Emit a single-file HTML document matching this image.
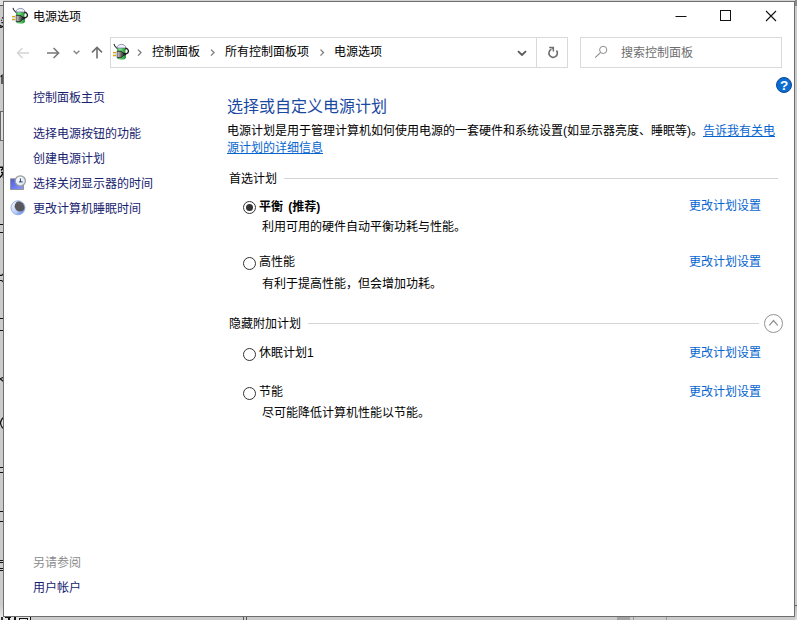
<!DOCTYPE html>
<html lang="zh-CN">
<head>
<meta charset="utf-8">
<title>电源选项</title>
<style>
*{box-sizing:border-box;margin:0;padding:0}
html,body{width:797px;height:620px;overflow:hidden;background:#cbcbcb}
body{position:relative;font-family:"Liberation Sans","Noto Sans CJK SC",sans-serif;font-size:12px;color:#000;line-height:17px}
#win{position:absolute;left:3px;top:1px;width:792px;height:616px;background:#fff;border:1px solid #6e6e6e}
.t{position:absolute;white-space:nowrap;line-height:17px;height:17px}
.nav{color:#17226f}
.lnk{color:#0565d0}
.u{text-decoration:underline}
.box{position:absolute;border:1px solid #d9d9d9;background:#fff}
.hr{position:absolute;height:1px;background:#d4d4d4}
.radio{position:absolute;width:13px;height:13px;border:1px solid #333;border-radius:50%;background:#fff}
.radio.on::after{content:"";position:absolute;left:2px;top:2px;width:7px;height:7px;border-radius:50%;background:#333}
svg{position:absolute;overflow:visible}
.d{position:absolute;background:#111}
</style>
</head>
<body>
<!-- desktop remnants behind the window -->
<div id="bg">
<div style="position:absolute;left:0;top:0;width:797px;height:1px;background:#d4d4d4"></div>
<div style="position:absolute;left:795px;top:0;width:2px;height:6px;background:#8a8a8a"></div>
<div style="position:absolute;left:0;top:0;width:3px;height:5px;background:#e0e0e0"></div>
<div class="d" style="left:0;top:5px;width:3px;height:1px;background:#5c5c5c"></div>
<svg style="left:0;top:16px" width="3" height="13" viewBox="0 0 3 13"><path d="M3 1.4 L2.2 2.4 M1.8 4 L1.2 4.6 M1.4 6.6 H3 M0 9.4 L1.6 10.2 M3 10 L1.8 11.2 L0 11.4" stroke="#111" stroke-width="1.3" fill="none"/></svg>
<svg style="left:0;top:74px" width="3" height="11" viewBox="0 0 3 11"><path d="M0.6 2.6 L2 1.4 V10" stroke="#111" stroke-width="1.2" fill="none"/></svg>
<div style="position:absolute;left:0;top:111px;width:3px;height:30px;border:1px solid #666;border-right:0;background:#dedede"></div>
<svg style="left:0;top:166px" width="4" height="13" viewBox="0 0 4 13"><rect x="0" y="0.6" width="3" height="11.6" fill="#dcdcdc"/><path d="M0 1.3 H3.6 M3.4 2 L1 4.6 M1 6.4 H3.6 M3.2 7.6 L0 11.4 M3.2 10.6 V11.6" stroke="#0a0a0a" stroke-width="1.5" fill="none"/></svg>
<div class="d" style="left:0;top:224px;width:3px;height:1px"></div>
<div class="d" style="left:0;top:232px;width:3px;height:1px"></div>
<svg style="left:0;top:272px" width="4" height="12" viewBox="0 0 4 12"><path d="M0 3.4 H1.6 Q2.6 3.2 3.6 1.2 M0 8.5 H1.6 Q2.6 8.8 3.6 10.6" stroke="#111" stroke-width="1.1" fill="none"/></svg>
<div class="d" style="left:0;top:318px;width:3px;height:1px"></div>
<div class="d" style="left:0;top:330px;width:3px;height:1px"></div>
<svg style="left:0;top:376px" width="4" height="7" viewBox="0 0 4 7"><path d="M3.6 1.2 L0 2.8 L3.6 5.4" stroke="#111" stroke-width="1.2" fill="none"/></svg>
<svg style="left:0;top:417px" width="4" height="12" viewBox="0 0 4 12"><path d="M3.6 0.2 Q-2.6 5.8 3.6 11.7 Z" fill="#dadada"/><path d="M3.6 0.2 Q-2.6 5.8 3.6 11.7" stroke="#111" stroke-width="1.2" fill="none"/></svg>
<div class="d" style="left:0;top:467px;width:3px;height:1px"></div>
<div class="d" style="left:0;top:472px;width:3px;height:1px"></div>
<div class="d" style="left:0;top:511px;width:3px;height:1px"></div>
<div class="d" style="left:0;top:521px;width:3px;height:1px"></div>
<div class="d" style="left:0;top:560px;width:3px;height:1px"></div>
<div class="d" style="left:0;top:562px;width:3px;height:1px"></div>
<div class="d" style="left:0;top:568px;width:3px;height:1px"></div>
<div class="d" style="left:0;top:570px;width:3px;height:1px"></div>
<div style="position:absolute;left:0;top:605px;width:3px;height:12px;background:linear-gradient(#cbcbcb,#e6e6e6)"></div>
<div class="d" style="left:795px;top:605px;width:2px;height:1px;background:#666"></div>
<div style="position:absolute;left:795px;top:606px;width:2px;height:14px;background:linear-gradient(#bdbdbd,#dcdcdc)"></div>
<!-- bottom strip -->
<div style="position:absolute;left:0;top:617px;width:31px;height:3px;background:#e4e4e4"></div>
<div class="d" style="left:1px;top:617px;width:2px;height:4px;background:#333"></div>
<div class="d" style="left:5px;top:617px;width:6px;height:1px"></div>
<div class="d" style="left:8px;top:617px;width:2px;height:4px"></div>
<div class="d" style="left:14px;top:617px;width:2px;height:4px"></div>
<div style="position:absolute;left:19px;top:618px;width:9px;height:4px;border:1px solid #111;background:#eee"></div>
<div class="d" style="left:30px;top:617px;width:1px;height:4px"></div>
<div class="d" style="left:243px;top:617px;width:1px;height:4px;background:#555"></div>
<div class="d" style="left:246px;top:617px;width:1px;height:4px;background:#555"></div>
<div style="position:absolute;left:617px;top:617px;width:13px;height:4px;background:#a2a2a2"></div>
<div class="d" style="left:633px;top:617px;width:1px;height:4px;background:#999"></div>
<div class="d" style="left:666px;top:617px;width:1px;height:4px;background:#999"></div>
</div>

<div id="win"></div>

<!-- title bar -->
<svg id="ico1" style="left:10px;top:6px" width="20" height="20" viewBox="0 0 20 20">
  <defs>
    <linearGradient id="gb" x1="0" y1="0" x2="1" y2="0"><stop offset="0" stop-color="#3aa845"/><stop offset=".3" stop-color="#7be486"/><stop offset="1" stop-color="#1c8a2a"/></linearGradient>
    <linearGradient id="gp" x1="0" y1="0" x2="1" y2="0"><stop offset="0" stop-color="#d8d8d8"/><stop offset=".4" stop-color="#777"/><stop offset=".8" stop-color="#2a2a2a"/><stop offset="1" stop-color="#1c1c1c"/></linearGradient>
  </defs>
  <path d="M3.1 2.2 C3.3 4.4 4.8 5 6.6 6.8" fill="none" stroke="#222" stroke-width="1.1" stroke-linecap="round"/>
  <path d="M6.1 6 C6.1 1.2 14.9 1.2 14.9 6 V15.4 C14.9 18.4 6.1 18.4 6.1 15.4 Z" fill="url(#gb)"/>
  <path d="M6.1 6 C6.1 1.2 14.9 1.2 14.9 6 Z" fill="#f1edff" stroke="#7c7ca8" stroke-width=".7"/>
  <path d="M14.4 8 C15.4 8 15.4 11 14.4 11 Z" fill="#e8f6ea"/>
  <path d="M14.8 6.3 C17.6 7 18.2 9.6 16.6 11 C15.8 11.7 14.6 11.8 13 12.1" fill="none" stroke="#222" stroke-width="1.4" stroke-linecap="round"/>
  <path d="M6.2 9.3 H9.8 C11.4 9.6 11.6 11.3 14.6 11.5 V12.7 C11.6 12.9 11.4 15.4 9.8 15.7 H6.2 Z" fill="url(#gp)" stroke="#111" stroke-width=".8"/>
  <rect x="2" y="9.9" width="3.6" height="1.4" fill="#e0a808"/>
  <rect x="2" y="12.7" width="3.6" height="1.4" fill="#e0a808"/>
  <rect x="2" y="11.3" width="3.2" height=".5" fill="#c8c8d8"/>
  <rect x="2" y="14.1" width="3.2" height=".5" fill="#c8c8d8"/>
  <rect x="5.2" y="9.8" width="1.1" height="5.4" fill="#cfcfcf"/>
</svg>
<div class="t" style="left:33px;top:9px;">电源选项</div>
<!-- window controls -->
<svg style="left:670px;top:6px" width="120" height="20" viewBox="0 0 120 20">
  <path d="M5.5 10.5 H16.5" stroke="#111" stroke-width="1" fill="none"/>
  <rect x="50.5" y="4.5" width="10" height="10" stroke="#111" stroke-width="1" fill="none"/>
  <path d="M96 5 L106 15 M106 5 L96 15" stroke="#111" stroke-width="1.1" fill="none"/>
</svg>

<!-- nav row -->
<svg style="left:10px;top:38px" width="100" height="30" viewBox="0 0 100 30">
  <path d="M19 15 H7.6 M12.4 10 L7.4 15 L12.4 20" stroke="#d4d4d4" stroke-width="1.4" fill="none"/>
  <path d="M37 15 H48.4 M43.6 10 L48.6 15 L43.6 20" stroke="#787878" stroke-width="1.6" fill="none"/>
  <path d="M63.6 12.8 L66.5 15.6 L69.4 12.8" stroke="#858585" stroke-width="1.4" fill="none"/>
  <path d="M87 20.6 V9.6 M82 14.4 L87 9.4 L92 14.4" stroke="#6f6f6f" stroke-width="1.6" fill="none"/>
</svg>
<div class="box" style="left:110px;top:37px;width:458px;height:31px"></div>
<div style="position:absolute;left:536px;top:38px;width:1px;height:29px;background:#d9d9d9"></div>
<div class="box" style="left:580px;top:37px;width:202px;height:31px"></div>
<svg id="ico2" style="left:111px;top:42px" width="20" height="20" viewBox="0 0 20 20">
  <path d="M3.1 2.2 C3.3 4.4 4.8 5 6.6 6.8" fill="none" stroke="#222" stroke-width="1.1" stroke-linecap="round"/>
  <path d="M6.1 6 C6.1 1.2 14.9 1.2 14.9 6 V15.4 C14.9 18.4 6.1 18.4 6.1 15.4 Z" fill="url(#gb)"/>
  <path d="M6.1 6 C6.1 1.2 14.9 1.2 14.9 6 Z" fill="#f1edff" stroke="#7c7ca8" stroke-width=".7"/>
  <path d="M14.4 8 C15.4 8 15.4 11 14.4 11 Z" fill="#e8f6ea"/>
  <path d="M14.8 6.3 C17.6 7 18.2 9.6 16.6 11 C15.8 11.7 14.6 11.8 13 12.1" fill="none" stroke="#222" stroke-width="1.4" stroke-linecap="round"/>
  <path d="M6.2 9.3 H9.8 C11.4 9.6 11.6 11.3 14.6 11.5 V12.7 C11.6 12.9 11.4 15.4 9.8 15.7 H6.2 Z" fill="url(#gp)" stroke="#111" stroke-width=".8"/>
  <rect x="2" y="9.9" width="3.6" height="1.4" fill="#e0a808"/>
  <rect x="2" y="12.7" width="3.6" height="1.4" fill="#e0a808"/>
  <rect x="2" y="11.3" width="3.2" height=".5" fill="#c8c8d8"/>
  <rect x="2" y="14.1" width="3.2" height=".5" fill="#c8c8d8"/>
  <rect x="5.2" y="9.8" width="1.1" height="5.4" fill="#cfcfcf"/>
</svg>
<svg style="left:130px;top:44px" width="440" height="18" viewBox="0 0 440 18">
  <g stroke="#787878" stroke-width="1.3" fill="none">
    <path d="M8 5.6 L11 8.6 L8 11.6"/>
    <path d="M81 5.6 L84 8.6 L81 11.6"/>
    <path d="M190.5 5.6 L193.5 8.6 L190.5 11.6"/>
  </g>
  <path d="M388 7.2 L392 11 L396 7.2" stroke="#585858" stroke-width="1.8" fill="none"/>
  <path d="M421.4 5.3 A4.2 4.2 0 1 0 426.5 6.6" stroke="#6b6b6b" stroke-width="1.6" fill="none"/>
  <path d="M419.2 3.5 H423.4 V7.5" stroke="#6b6b6b" stroke-width="1.4" fill="none"/><path d="M421 3.6 H423.4 V6.6 Z" fill="#7d7d7d"/>
</svg>
<svg style="left:592px;top:44px" width="20" height="18" viewBox="0 0 20 18">
  <circle cx="11.2" cy="5.9" r="3.6" stroke="#8c8c8c" stroke-width="1" fill="none"/>
  <path d="M8.4 8.6 L3.2 13.6" stroke="#8c8c8c" stroke-width="1.1" fill="none"/>
</svg>
<div class="t" style="left:152px;top:44px;">控制面板</div>
<div class="t" style="left:225px;top:44px;">所有控制面板项</div>
<div class="t" style="left:334px;top:44px;">电源选项</div>
<div class="t" style="left:621px;top:45px;color:#6d6d6d">搜索控制面板</div>

<!-- help -->
<svg style="left:776px;top:77px" width="16" height="16" viewBox="0 0 16 16">
  <circle cx="8" cy="8" r="7.5" fill="#0c6cd0" stroke="#0a4a98" stroke-width="1"/>
  <text x="8" y="12.8" text-anchor="middle" font-family="Liberation Sans, sans-serif" font-weight="bold" font-size="13.5" fill="#fff">?</text>
</svg>

<!-- left pane -->
<div class="t nav" style="left:33px;top:90px;">控制面板主页</div>
<div class="t nav" style="left:33px;top:126px;">选择电源按钮的功能</div>
<div class="t nav" style="left:33px;top:151px;">创建电源计划</div>
<div class="t nav" style="left:33px;top:176px;">选择关闭显示器的时间</div>
<div class="t nav" style="left:33px;top:201px;">更改计算机睡眠时间</div>
<svg style="left:8px;top:174px" width="20" height="20" viewBox="0 0 20 20">
  <defs>
    <linearGradient id="gm" x1="0" y1="0" x2="1" y2="1"><stop offset="0" stop-color="#4657e6"/><stop offset="1" stop-color="#8d9cff"/></linearGradient>
    <radialGradient id="gc" cx=".4" cy=".4" r=".7"><stop offset="0" stop-color="#fff"/><stop offset="1" stop-color="#cfe0ee"/></radialGradient>
    <linearGradient id="gn" x1="0" y1="0" x2="1" y2="1"><stop offset="0" stop-color="#fff"/><stop offset=".6" stop-color="#b9c8f6"/><stop offset="1" stop-color="#3f6fe0"/></linearGradient>
  </defs>
  <rect x="2.6" y="4.8" width="12.8" height="10.6" fill="url(#gm)" stroke="#8a8a8a" stroke-width=".9"/>
  <circle cx="12.3" cy="6.9" r="5.1" fill="url(#gc)" stroke="#9c9c9c" stroke-width="1.2"/>
  <path d="M12.4 4.4 V8 M10.9 7.9 H14.7" stroke="#2b3c74" stroke-width="1" fill="none"/>
</svg>
<svg style="left:8px;top:198px" width="20" height="20" viewBox="0 0 20 20">
  <circle cx="10" cy="9.8" r="7" fill="url(#gn)" stroke="#86aee6" stroke-width=".9"/>
  <clipPath id="cm"><circle cx="10" cy="9.8" r="6.5"/></clipPath><circle cx="12" cy="8.2" r="5.3" fill="#57575c" clip-path="url(#cm)"/>
</svg>
<div class="t" style="left:33px;top:555px;color:#8c8c8c">另请参阅</div>
<div class="t nav" style="left:33px;top:580px;">用户帐户</div>

<!-- main -->
<div class="t" style="left:227px;top:96px;font-size:16px;line-height:21px;height:21px;color:#1a49a2">选择或自定义电源计划</div>
<div class="t" style="left:227px;top:123px;">电源计划是用于管理计算机如何使用电源的一套硬件和系统设置(如显示器亮度、睡眠等)。<span class="lnk u">告诉我有关电</span></div>
<div class="t lnk u" style="left:227px;top:140px;">源计划的详细信息</div>

<div class="t" style="left:229px;top:171px;">首选计划</div>
<div class="hr" style="left:284px;top:178px;width:494px"></div>

<div class="radio on" style="left:243px;top:201px"></div>
<div class="t" style="left:259px;top:199px;font-weight:bold;word-spacing:2px">平衡 (推荐)</div>
<div class="t" style="left:262px;top:219px;">利用可用的硬件自动平衡功耗与性能。</div>
<div class="t lnk" style="left:689px;top:198px;">更改计划设置</div>

<div class="radio" style="left:243px;top:257px"></div>
<div class="t" style="left:259px;top:254px;">高性能</div>
<div class="t" style="left:262px;top:276px;">有利于提高性能，但会增加功耗。</div>
<div class="t lnk" style="left:689px;top:254px;">更改计划设置</div>

<div class="t" style="left:229px;top:316px;">隐藏附加计划</div>
<div class="hr" style="left:308px;top:323px;width:451px"></div>
<svg style="left:763px;top:314px" width="20" height="20" viewBox="0 0 20 20">
  <circle cx="10.5" cy="9.5" r="9" fill="#fff" stroke="#939393" stroke-width="1"/>
  <path d="M6.3 11.4 L10.5 6.6 L14.7 11.4" stroke="#939393" stroke-width="1.3" fill="none"/>
</svg>

<div class="radio" style="left:243px;top:348px"></div>
<div class="t" style="left:259px;top:345px;">休眠计划1</div>
<div class="t lnk" style="left:689px;top:345px;">更改计划设置</div>

<div class="radio" style="left:243px;top:387px"></div>
<div class="t" style="left:259px;top:384px;">节能</div>
<div class="t" style="left:262px;top:405px;">尽可能降低计算机性能以节能。</div>
<div class="t lnk" style="left:689px;top:384px;">更改计划设置</div>

</body>
</html>
